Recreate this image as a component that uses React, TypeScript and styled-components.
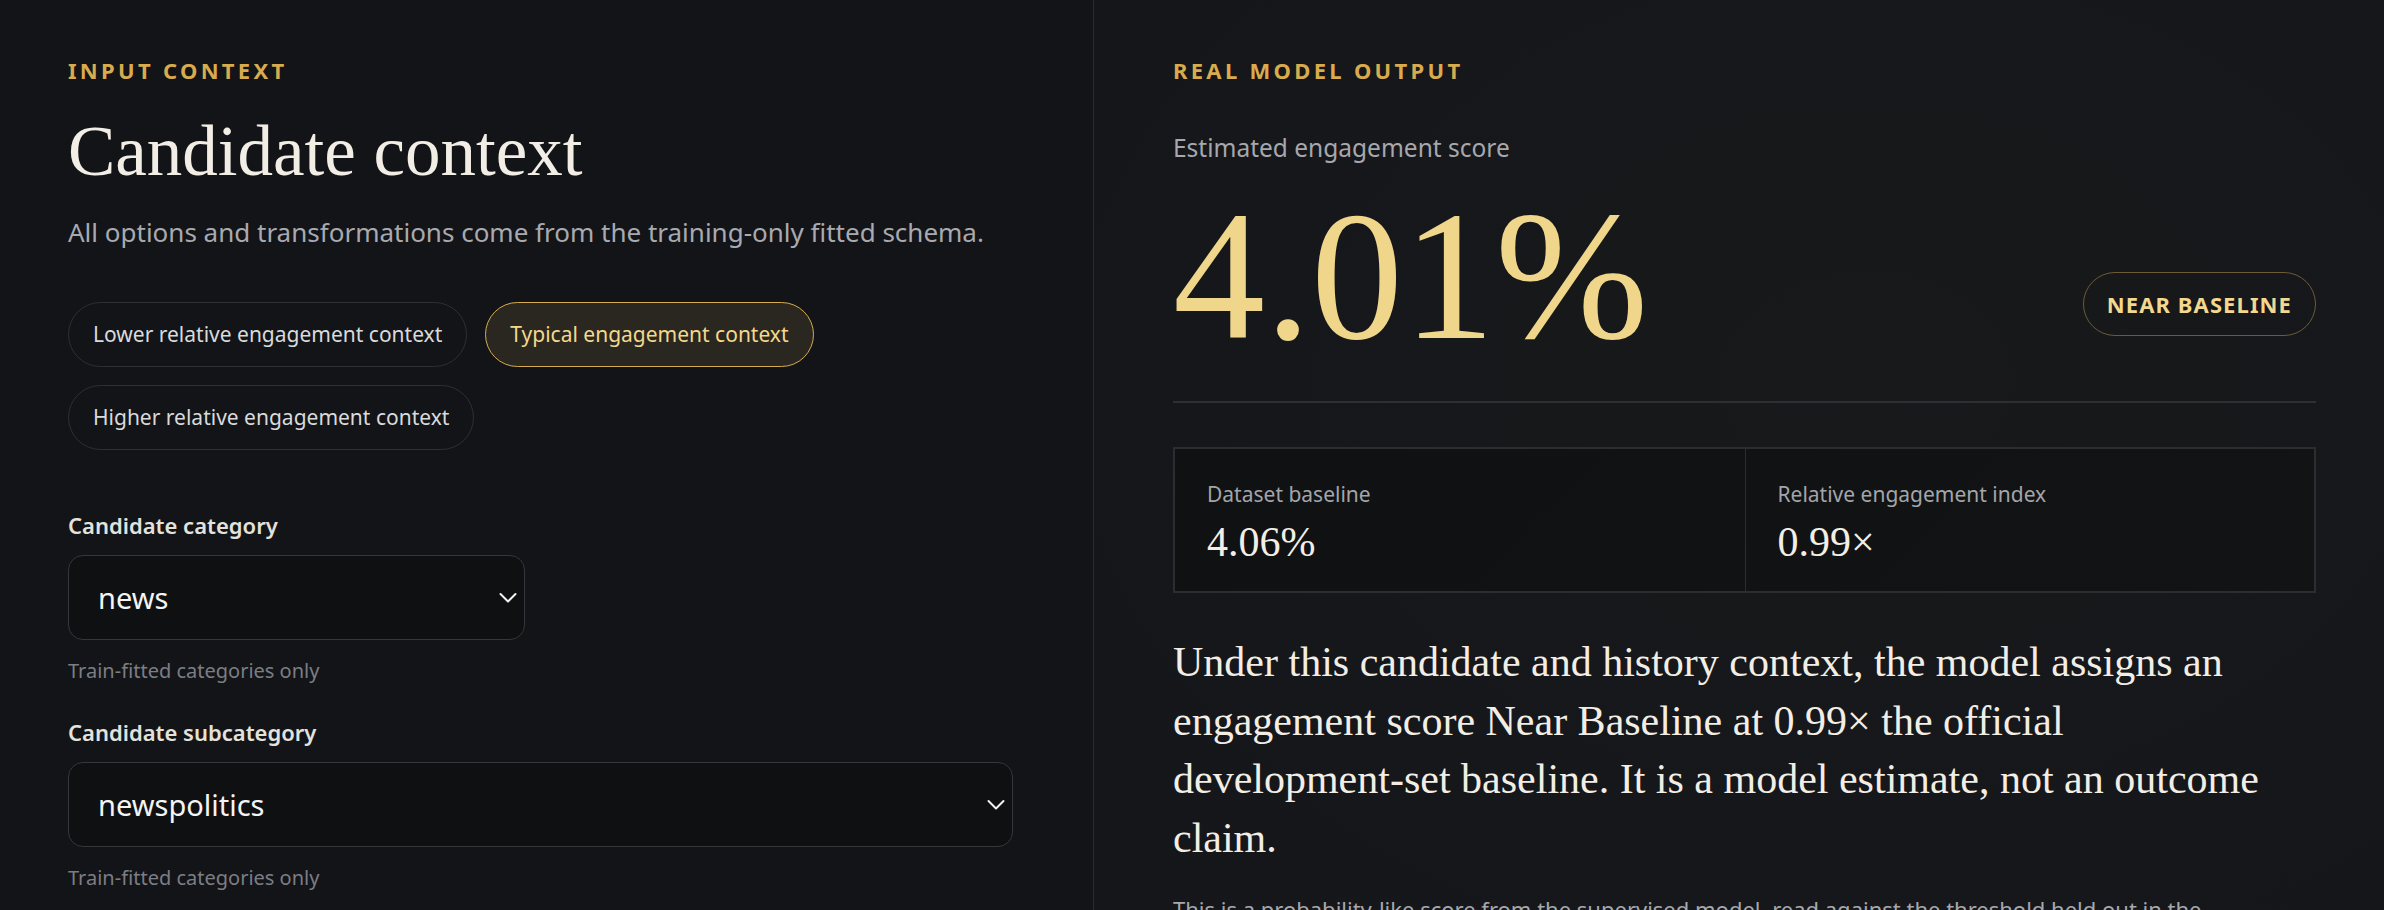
import React from "react";
import styled, { createGlobalStyle } from "styled-components";

const GlobalStyle = createGlobalStyle`
  html, body {
    margin: 0;
    padding: 0;
    background: #131418;
  }
  * {
    box-sizing: border-box;
  }
`;

const sans = `"Noto Sans", "Open Sans", sans-serif`;
const serif = `"Liberation Serif", "DejaVu Serif", serif`;

const Page = styled.div`
  display: grid;
  grid-template-columns: 1094px 1fr;
  height: 910px;
  overflow: hidden;
  font-family: ${sans};
`;

const InputPanel = styled.section`
  background: #131418;
  border-right: 1px solid #2a2c30;
  padding: 57px 80px 0 68px;
`;

const OutputPanel = styled.section`
  background: radial-gradient(
    ellipse at 60% 40%,
    #17191b 0%,
    #16171a 60%,
    #151619 100%
  );
  padding: 57px 68px 0 79px;
`;

const Eyebrow = styled.div`
  font-size: 22px;
  line-height: 26px;
  font-weight: 700;
  letter-spacing: 0.15em;
  text-transform: uppercase;
  color: #d8ab4e;
`;

const Heading = styled.h1`
  margin: 30px 0 0;
  font-family: ${serif};
  font-weight: 400;
  font-size: 71px;
  line-height: 77px;
  color: #f2eee6;
`;

const Subtitle = styled.p`
  margin: 25px 0 0;
  font-size: 26px;
  line-height: 35px;
  color: #a8aaaf;
`;

const ChipRow = styled.div`
  display: flex;
  flex-wrap: wrap;
  gap: 18px;
  margin-top: 52px;
`;

const Chip = styled.button<{ $active?: boolean }>`
  font-family: ${sans};
  font-size: 21px;
  line-height: 27px;
  padding: 18px 24px;
  border-radius: 999px;
  border: 1.5px solid ${(p) => (p.$active ? "#d6ac50" : "#2d2f34")};
  background: ${(p) => (p.$active ? "#2a2720" : "transparent")};
  color: ${(p) => (p.$active ? "#f3d88d" : "#d9dadc")};
  cursor: pointer;
`;

const FieldGrid = styled.div`
  display: grid;
  grid-template-columns: 1fr 1fr;
  column-gap: 32px;
  row-gap: 34px;
  margin-top: 61px;
`;

const Field = styled.div<{ $wide?: boolean }>`
  display: flex;
  flex-direction: column;
  grid-column: ${(p) => (p.$wide ? "1 / -1" : "auto")};
`;

const Label = styled.label`
  font-size: 22px;
  line-height: 28px;
  font-weight: 600;
  color: #e4e2dd;
`;

const SelectWrap = styled.div`
  position: relative;
  margin-top: 16px;
`;

const Select = styled.select`
  appearance: none;
  width: 100%;
  height: 85px;
  padding: 0 50px 0 29px;
  border-radius: 15px;
  border: 1.5px solid #34373c;
  background: #0f1012;
  color: #f4f4f4;
  font-family: ${sans};
  font-size: 29px;
  outline: none;
`;

const Chevron = styled.svg`
  position: absolute;
  right: 8px;
  top: 50%;
  transform: translateY(-50%);
  pointer-events: none;
`;

const Hint = styled.div`
  margin-top: 17px;
  font-size: 20px;
  line-height: 27px;
  color: #7b7e84;
`;

const ScoreLabel = styled.div`
  margin-top: 48px;
  font-size: 24.5px;
  line-height: 33px;
  color: #a6a8ad;
`;

const Hero = styled.div`
  display: flex;
  justify-content: space-between;
  align-items: flex-end;
  margin-top: 20px;
  padding-bottom: 33px;
  border-bottom: 2px solid #2c2f33;
`;

const BigNumber = styled.div`
  font-family: ${serif};
  font-size: 184px;
  line-height: 184px;
  color: #efd68a;
`;

const Badge = styled.div`
  margin-bottom: 32px;
  height: 64px;
  display: flex;
  align-items: center;
  padding: 0 23px;
  border-radius: 999px;
  border: 1.5px solid #6d5b37;
  font-size: 22px;
  font-weight: 700;
  letter-spacing: 0.05em;
  color: #f3d88f;
`;

const Stats = styled.div`
  display: grid;
  grid-template-columns: 1fr 1fr;
  margin-top: 44px;
  border: 2px solid #2b2d31;
  background: linear-gradient(135deg, #101113 0%, #121315 100%);
`;

const StatCell = styled.div`
  padding: 31px 32px 25px;
  & + & {
    border-left: 1.5px solid #2b2d31;
  }
`;

const StatLabel = styled.div`
  font-size: 21px;
  line-height: 28px;
  color: #a3a5aa;
`;

const StatValue = styled.div`
  margin-top: 10px;
  font-family: ${serif};
  font-size: 42px;
  line-height: 48px;
  color: #f3efe6;
`;

const Summary = styled.p`
  margin: 40px 0 0;
  font-family: ${serif};
  font-size: 42px;
  line-height: 58.5px;
  color: #f2eee6;
`;

const NoWrap = styled.span`
  white-space: nowrap;
`;

const Footnote = styled.p`
  margin: 26px 0 0;
  font-size: 22px;
  line-height: 33px;
  color: #a6a8ad;
`;

const ChevronIcon = () => (
  <Chevron width="18" height="11" viewBox="0 0 18 11" fill="none">
    <polyline
      points="1.5,1.5 9,9 16.5,1.5"
      stroke="#f2f2f2"
      strokeWidth="2"
      strokeLinecap="round"
      strokeLinejoin="round"
    />
  </Chevron>
);

const presets = [
  { label: "Lower relative engagement context", active: false },
  { label: "Typical engagement context", active: true },
  { label: "Higher relative engagement context", active: false },
];

export default function App() {
  return (
    <>
      <GlobalStyle />
      <Page>
        <InputPanel>
          <Eyebrow>Input context</Eyebrow>
          <Heading>Candidate context</Heading>
          <Subtitle>
            All options and transformations come from the training-only fitted
            schema.
          </Subtitle>
          <ChipRow>
            {presets.map((p) => (
              <Chip key={p.label} $active={p.active}>
                {p.label}
              </Chip>
            ))}
          </ChipRow>
          <FieldGrid>
            <Field>
              <Label>Candidate category</Label>
              <SelectWrap>
                <Select defaultValue="news">
                  <option value="news">news</option>
                  <option value="sports">sports</option>
                  <option value="finance">finance</option>
                </Select>
                <ChevronIcon />
              </SelectWrap>
              <Hint>Train-fitted categories only</Hint>
            </Field>
            <Field $wide>
              <Label>Candidate subcategory</Label>
              <SelectWrap>
                <Select defaultValue="newspolitics">
                  <option value="newspolitics">newspolitics</option>
                  <option value="newsus">newsus</option>
                  <option value="newsworld">newsworld</option>
                </Select>
                <ChevronIcon />
              </SelectWrap>
              <Hint>Train-fitted categories only</Hint>
            </Field>
          </FieldGrid>
        </InputPanel>

        <OutputPanel>
          <Eyebrow>Real model output</Eyebrow>
          <ScoreLabel>Estimated engagement score</ScoreLabel>
          <Hero>
            <BigNumber>4.01%</BigNumber>
            <Badge>NEAR BASELINE</Badge>
          </Hero>
          <Stats>
            <StatCell>
              <StatLabel>Dataset baseline</StatLabel>
              <StatValue>4.06%</StatValue>
            </StatCell>
            <StatCell>
              <StatLabel>Relative engagement index</StatLabel>
              <StatValue>0.99×</StatValue>
            </StatCell>
          </Stats>
          <Summary>
            Under this candidate and history context, the model assigns an
            engagement score Near Baseline at 0.99× the official{" "}
            <NoWrap>development-set</NoWrap> baseline. It is a model estimate,
            not an outcome claim.
          </Summary>
          <Footnote>
            This is a probability-like score from the supervised model, read
            against the threshold held out in the development split.
          </Footnote>
        </OutputPanel>
      </Page>
    </>
  );
}
